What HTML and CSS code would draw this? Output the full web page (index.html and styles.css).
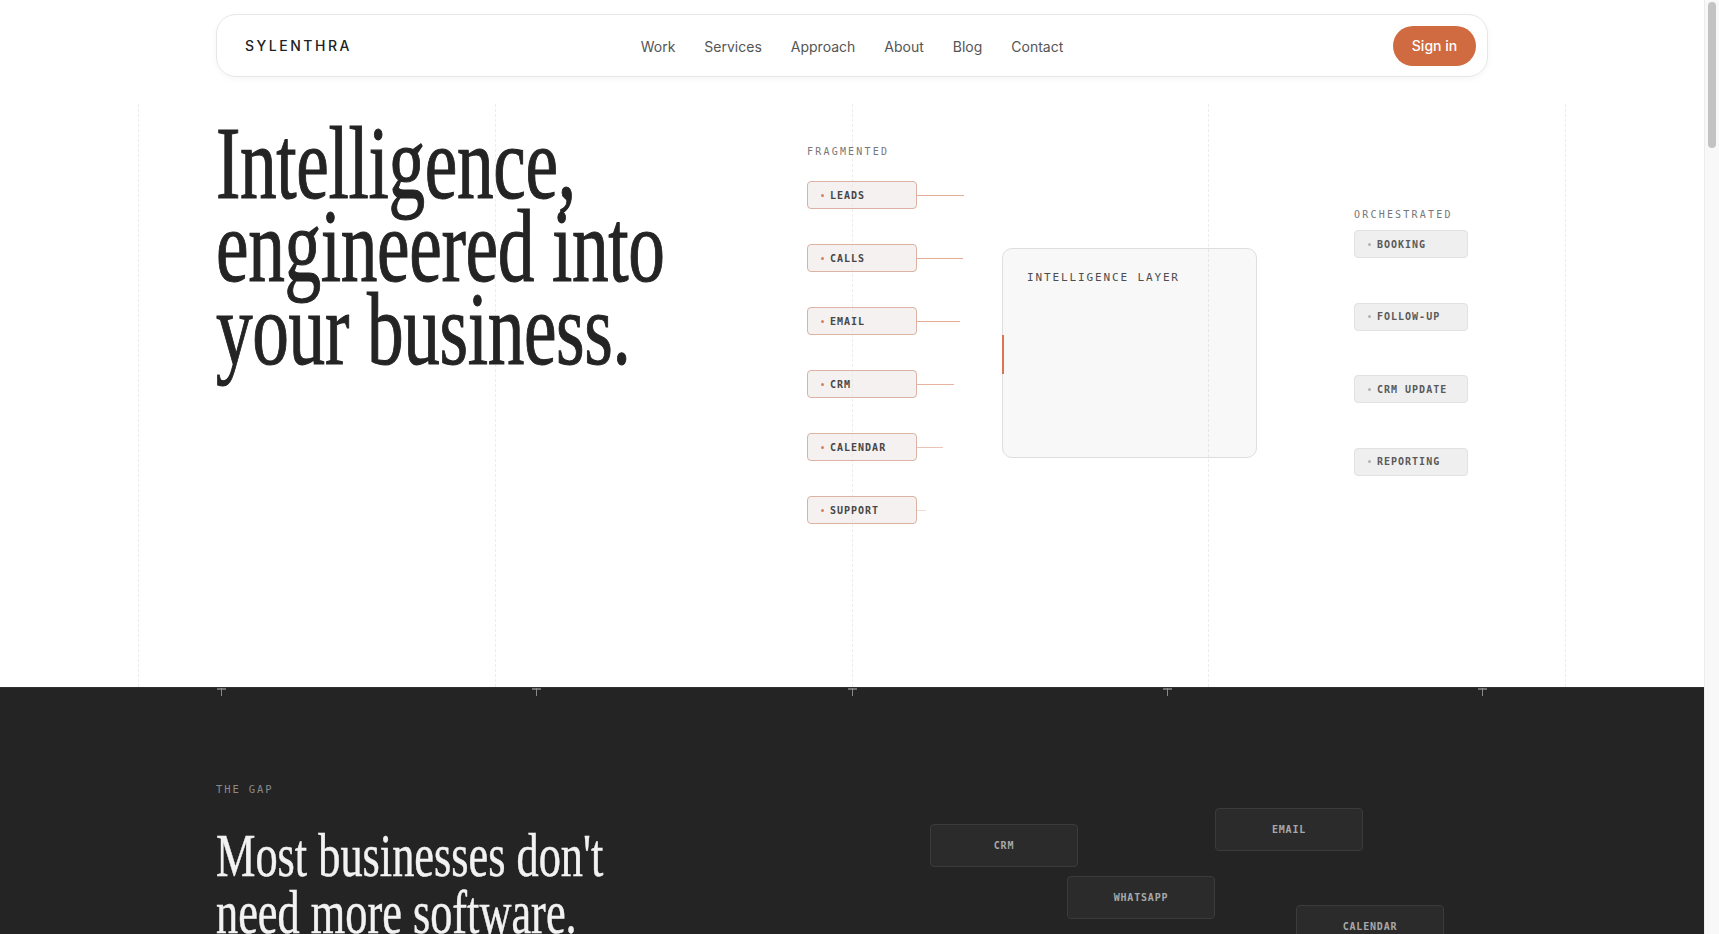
FILE: index.html
```html
<!DOCTYPE html>
<html>
<head>
    <title>Sylenthra</title>
    <meta name="viewport" content="width=device-width, initial-scale=1">
    <link rel="stylesheet" href="styles.css">
</head>
<body>
    <header class="site-header">
        <nav class="nav">
            <a class="logo" href="#">SYLENTHRA</a>
            <ul class="nav-links">
                <li><a href="#">Work</a></li>
                <li><a href="#">Services</a></li>
                <li><a href="#">Approach</a></li>
                <li><a href="#">About</a></li>
                <li><a href="#">Blog</a></li>
                <li><a href="#">Contact</a></li>
            </ul>
            <div class="nav-actions">
                <a class="btn-signin" href="#">Sign in</a>
            </div>
        </nav>
    </header>

    <section class="hero">
        <div class="grid-lines">
            <span></span><span></span><span></span><span></span>
        </div>
        <div class="hero-inner">
            <h1 class="hero-title">Intelligence,<br>engineered into<br>your business.</h1>

            <div class="diagram">
                <div class="col-in">
                    <div class="diagram-label">FRAGMENTED</div>
                    <div class="chip-stack stack-in">
                        <div class="flow-row"><div class="chip chip-in"><i class="dot"></i>LEADS</div><span class="wire wire-1"></span></div>
                        <div class="flow-row"><div class="chip chip-in"><i class="dot"></i>CALLS</div><span class="wire wire-2"></span></div>
                        <div class="flow-row"><div class="chip chip-in"><i class="dot"></i>EMAIL</div><span class="wire wire-3"></span></div>
                        <div class="flow-row"><div class="chip chip-in"><i class="dot"></i>CRM</div><span class="wire wire-4"></span></div>
                        <div class="flow-row"><div class="chip chip-in"><i class="dot"></i>CALENDAR</div><span class="wire wire-5"></span></div>
                        <div class="flow-row"><div class="chip chip-in"><i class="dot"></i>SUPPORT</div><span class="wire wire-6"></span></div>
                    </div>
                </div>

                <div class="col-core">
                    <div class="core-box">
                        <div class="core-label">INTELLIGENCE LAYER</div>
                    </div>
                </div>

                <div class="col-out">
                    <div class="diagram-label">ORCHESTRATED</div>
                    <div class="chip-stack stack-out">
                        <div class="chip chip-out"><i class="dot"></i>BOOKING</div>
                        <div class="chip chip-out"><i class="dot"></i>FOLLOW-UP</div>
                        <div class="chip chip-out"><i class="dot"></i>CRM UPDATE</div>
                        <div class="chip chip-out"><i class="dot"></i>REPORTING</div>
                    </div>
                </div>
            </div>
        </div>
    </section>

    <section class="gap">
        <div class="ticks">
            <span></span><span></span><span></span><span></span><span></span>
        </div>
        <div class="gap-inner">
            <div class="gap-text">
                <div class="eyebrow">THE GAP</div>
                <h2 class="gap-title">Most businesses don't<br>need more software.</h2>
                <p class="gap-copy">They need the tools they already pay for to talk to each other, and a layer of intelligence that turns scattered signals into action.</p>
            </div>
            <div class="gap-canvas">
                <div class="tool tool-crm">CRM</div>
                <div class="tool tool-email">EMAIL</div>
                <div class="tool tool-whatsapp">WHATSAPP</div>
                <div class="tool tool-calendar">CALENDAR</div>
            </div>
        </div>
    </section>

    <section class="more">
        <div class="more-inner">
            <div class="eyebrow">APPROACH</div>
            <h2 class="more-title">Built around how you already work.</h2>
        </div>
    </section>

    <footer class="footer">
        <div class="more-inner">
            <span class="logo">SYLENTHRA</span>
        </div>
    </footer>

    <!-- window scrollbar, drawn since the capture hides the native one -->
    <div class="scrollbar"><div class="scrollbar-thumb"></div></div>
</body>
</html>
```

FILE: styles.css
```css
body {
    margin: 0 15px 0 0;
    background-color: #fff;
    color: #242424;
    font-family: Inter, "Noto Sans", sans-serif;
}

a {
    color: inherit;
    text-decoration: none;
}

/* Top navigation */
.site-header {
    padding-top: 14px;
}

.nav {
    box-sizing: border-box;
    width: 1272px;
    height: 63px;
    margin: 0 auto;
    padding: 0 11px;
    display: grid;
    grid-template-columns: 1fr auto 1fr;
    align-items: center;
    background-color: #fff;
    border: 1px solid #e7e7e7;
    border-radius: 20px;
    box-shadow: 0 2px 6px rgba(0, 0, 0, 0.04);
}

.logo {
    font-size: 14px;
    font-weight: 500;
    letter-spacing: 0.18em;
    color: #222;
}

.nav .logo {
    padding-left: 17px;
}

.nav-links {
    display: flex;
    gap: 29px;
    list-style: none;
    margin: 0;
    padding: 0;
}

.nav-links a {
    font-size: 14px;
    color: #555;
}

.nav-actions {
    display: flex;
    justify-content: flex-end;
}

.btn-signin {
    display: flex;
    align-items: center;
    justify-content: center;
    width: 83px;
    height: 40px;
    border-radius: 20px;
    background-color: #d06b41;
    color: #fff;
    font-size: 14px;
    font-weight: 500;
}

/* Hero */
.hero {
    position: relative;
    height: 610px;
}

/* Dashed column guides behind the hero */
.grid-lines {
    position: absolute;
    top: 27px;
    bottom: 0;
    left: calc(50% - 714px);
    width: 1428px;
    display: flex;
}

.grid-lines span {
    flex: 1;
    border-left: 1px dashed #ececec;
}

.grid-lines span:last-child {
    border-right: 1px dashed #ececec;
}

.hero-inner {
    position: relative;
    width: 1272px;
    margin: 0 auto;
    padding-top: 44px;
    display: flex;
    align-items: flex-start;
}

.hero-title {
    flex: none;
    width: 591px;
    margin: 0;
    font-family: "Liberation Serif", serif;
    font-size: 104px;
    font-weight: 400;
    line-height: 83px;
    letter-spacing: -0.005em;
    white-space: nowrap;
    color: #242424;
    -webkit-text-stroke: 1.1px #242424;
    transform: scaleX(0.705);
    transform-origin: left top;
}

/* Fragmented -> intelligence layer -> orchestrated */
.diagram {
    display: flex;
    align-items: flex-start;
    margin-top: 25px;
    font-family: "DejaVu Sans Mono", "Liberation Mono", monospace;
}

.diagram-label {
    font-size: 10px;
    line-height: 12px;
    letter-spacing: 0.22em;
    color: #777;
}

.col-in {
    width: 195px;
}

.chip-stack {
    display: flex;
    flex-direction: column;
}

.stack-in {
    margin-top: 23px;
    gap: 35px;
}

.stack-out {
    margin-top: 9px;
    gap: 44.5px;
}

.flow-row {
    display: flex;
    align-items: center;
}

.chip {
    box-sizing: border-box;
    height: 28px;
    display: flex;
    align-items: center;
    padding-left: 13px;
    border-radius: 4px;
    font-size: 10px;
    font-weight: bold;
    letter-spacing: 0.1em;
}

.chip .dot {
    width: 3px;
    height: 3px;
    margin-right: 6px;
    border-radius: 50%;
}

.chip-in {
    width: 110px;
    background-color: rgba(236, 232, 230, 0.6);
    border: 1px solid #dcb2a2;
    color: #474747;
}

.chip-in .dot {
    background-color: #d9805c;
}

.chip-out {
    width: 114px;
    background-color: rgba(232, 232, 232, 0.7);
    border: 1px solid #e1e1e1;
    color: #5a5a5a;
}

.chip-out .dot {
    background-color: #b3b3b3;
}

.wire {
    height: 1px;
    background-color: #e4ab95;
}

.wire-1 { width: 47px; }
.wire-2 { width: 46px; }
.wire-3 { width: 43px; }
.wire-4 { width: 37px; opacity: 0.9; }
.wire-5 { width: 26px; opacity: 0.7; }
.wire-6 { width: 9px; opacity: 0.4; }

.col-core {
    margin-top: 102px;
    margin-right: 97px;
}

.core-box {
    position: relative;
    box-sizing: border-box;
    width: 255px;
    height: 210px;
    padding: 22px 24px;
    background-color: rgba(0, 0, 0, 0.028);
    border: 1px solid #dedede;
    border-radius: 10px;
}

/* signal arriving on the left edge */
.core-box::before {
    content: "";
    position: absolute;
    left: -1px;
    top: 86px;
    width: 2px;
    height: 39px;
    background-color: #d77650;
}

.core-label {
    font-size: 11px;
    line-height: 13px;
    letter-spacing: 0.17em;
    color: #4d4d4d;
}

.col-out {
    margin-top: 63px;
}

/* Dark "gap" section */
.gap {
    background-color: #242424;
    border-top: 1px solid #2f2f2f;
    color: #f2f2f2;
    padding-bottom: 160px;
}

.ticks {
    width: 1270px;
    height: 8px;
    margin: 0 auto;
    display: flex;
    justify-content: space-between;
}

.ticks span {
    position: relative;
    width: 9px;
    height: 8px;
}

.ticks span::before {
    content: "";
    position: absolute;
    left: 0;
    top: 0;
    width: 9px;
    height: 2px;
    background-color: #6e6e6e;
}

.ticks span::after {
    content: "";
    position: absolute;
    left: 4px;
    top: 0;
    width: 1px;
    height: 8px;
    background-color: #8a8a8a;
}

.gap-inner {
    width: 1272px;
    margin: 0 auto;
    padding-top: 87px;
    display: flex;
    align-items: flex-start;
}

.gap-text {
    flex: none;
    width: 714px;
}

.eyebrow {
    font-family: "DejaVu Sans Mono", "Liberation Mono", monospace;
    font-size: 10.5px;
    line-height: 13px;
    letter-spacing: 0.18em;
    color: #8a8a8a;
}

.gap-title {
    margin: 31px 0 0;
    font-family: "Liberation Serif", serif;
    font-size: 62px;
    font-weight: 400;
    line-height: 57px;
    white-space: nowrap;
    -webkit-text-stroke: 0.5px #f2f2f2;
    transform: scaleX(0.715);
    transform-origin: left top;
}

.gap-copy {
    max-width: 440px;
    margin: 40px 0 0;
    font-size: 16px;
    line-height: 1.6;
    color: #9a9a9a;
}

/* loose tools floating on the right */
.gap-canvas {
    position: relative;
    flex: 1;
    height: 200px;
    margin-top: 25px;
}

.tool {
    position: absolute;
    box-sizing: border-box;
    width: 148px;
    height: 43px;
    display: flex;
    align-items: center;
    justify-content: center;
    background-color: #2b2b2b;
    border: 1px solid #3b3b3b;
    border-radius: 4px;
    font-family: "DejaVu Sans Mono", "Liberation Mono", monospace;
    font-size: 10px;
    font-weight: bold;
    letter-spacing: 0.08em;
    color: #a8a8a8;
}

.tool-crm { left: 0; top: 16px; }
.tool-email { left: 285px; top: 0; }
.tool-whatsapp { left: 137px; top: 68px; }
.tool-calendar { left: 366px; top: 97px; }

/* Rest of the page */
.more {
    min-height: 1400px;
    padding-top: 140px;
}

.more-inner {
    width: 1272px;
    margin: 0 auto;
}

.more-title {
    margin: 36px 0 0;
    font-family: "Liberation Serif", serif;
    font-size: 60px;
    font-weight: 400;
}

.footer {
    padding: 60px 0;
    border-top: 1px solid #eee;
}

/* Scrollbar */
.scrollbar {
    position: fixed;
    top: 0;
    right: 0;
    bottom: 0;
    width: 15px;
    background-color: #f8f8f8;
    border-left: 1px solid #ececec;
    box-sizing: border-box;
}

.scrollbar-thumb {
    margin: 2px 0 0 3px;
    width: 8px;
    height: 146px;
    border-radius: 4px;
    background-color: #c3c3c3;
}
```
